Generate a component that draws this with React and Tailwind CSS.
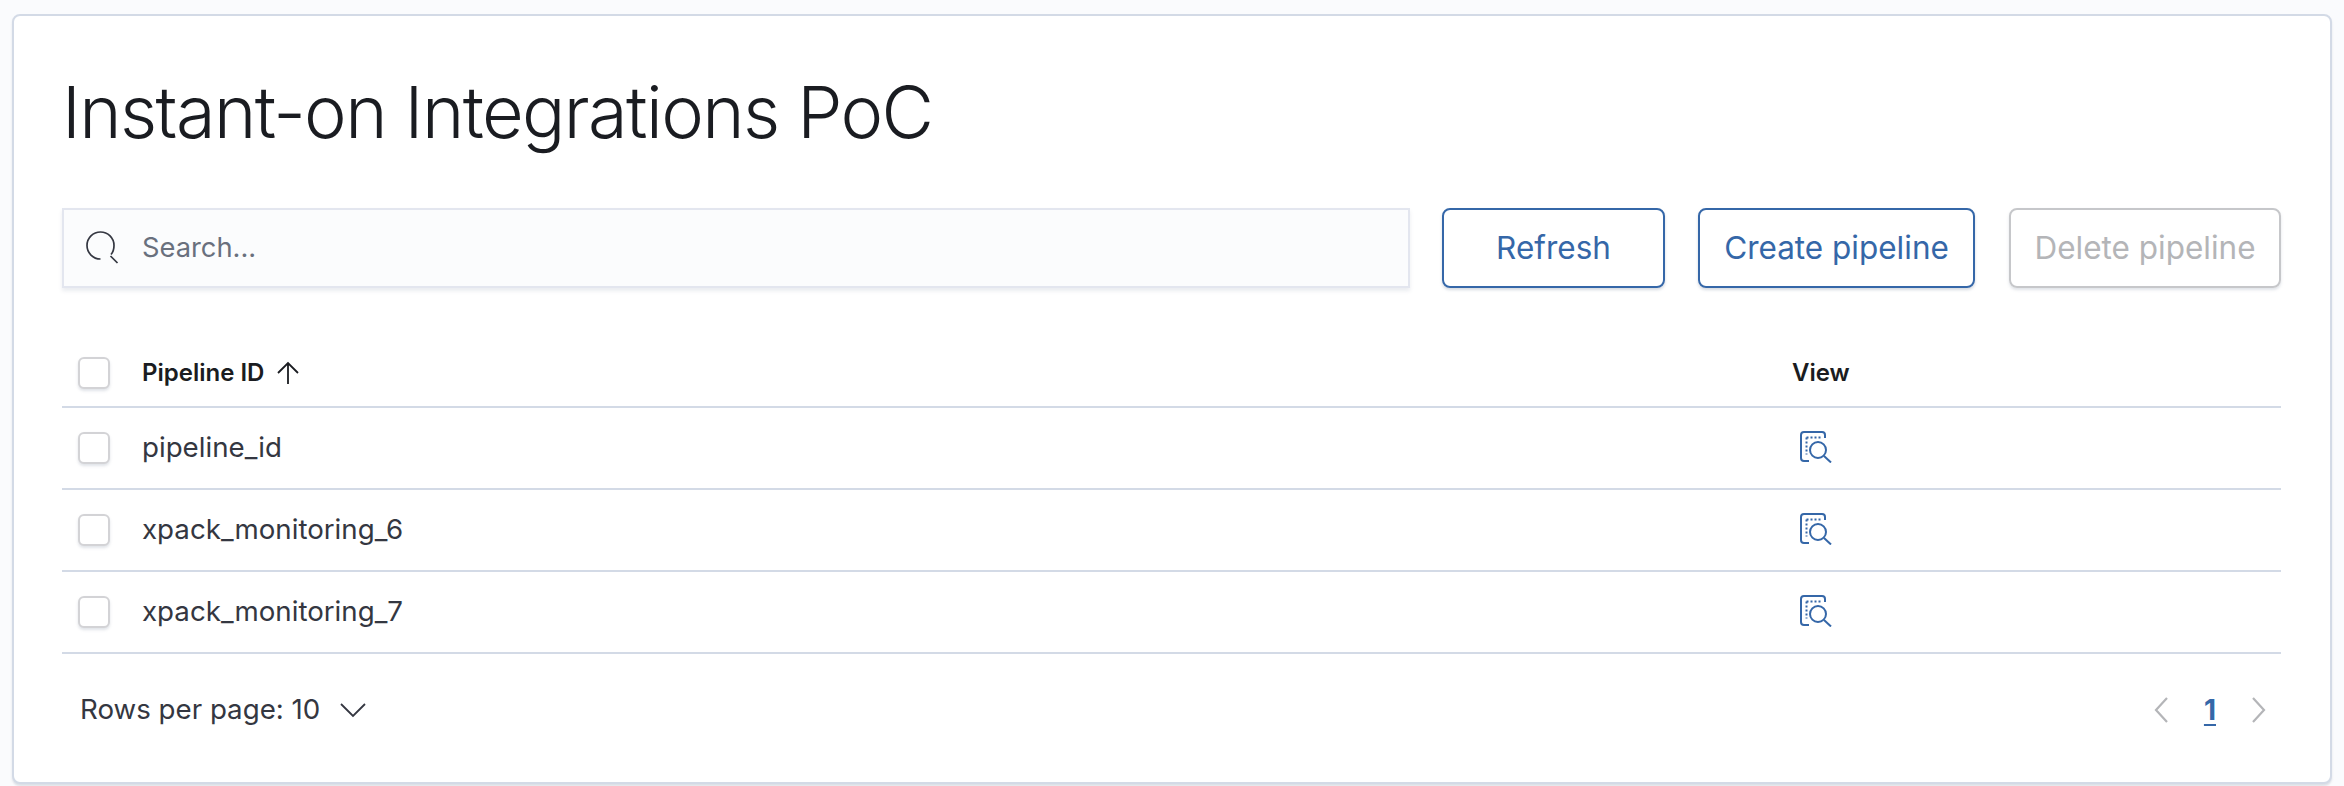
const F = { fontFamily: "Inter, 'Liberation Sans', sans-serif" };

function Check() {
  return <span className="block w-[32px] h-[32px] rounded-[6px] bg-white border-2 border-[#d3d3d6] shadow-[0_2px_3px_rgba(152,162,179,0.3)] shrink-0" />;
}

function ViewIcon() {
  return (
    <svg className="ml-[8px] mb-[2px]" width="34" height="32" viewBox="0 0 34 32" fill="none" stroke="#3567a8" strokeWidth="2">
      <path d="M9 30H4a3 3 0 0 1-3-3V4a3 3 0 0 1 3-3h18a3 3 0 0 1 3 3v3" />
      <path d="M6.5 6.5h15M6.5 6.5v17" strokeDasharray="2 2" />
      <circle cx="18" cy="19" r="8" />
      <path d="M24 25l7 6.5" />
    </svg>
  );
}

function Row({ name }) {
  return (
    <div className="flex items-center h-[82px] border-b-2 border-[#d3dae6]">
      <div className="w-[80px] pl-[16px] flex items-center"><Check /></div>
      <div className="w-[1650px] text-[27.7px] text-[#343741]">{name}</div>
      <ViewIcon />
    </div>
  );
}

export default function App() {
  return (
    <div style={F} className="w-[2344px] h-[786px] bg-[#fafbfd] pt-[14px] px-[12px]">
      <div className="w-[2320px] h-[770px] bg-white border-2 border-[#d3dae6] rounded-[8px] shadow-[0_2px_2px_rgba(152,162,179,0.3)] pt-[54px] pl-[48px] pr-[49px]">
        <h1 className="text-[72px] leading-[84px] font-light text-[#1a1c21] tracking-[-1.6px]">Instant-on Integrations PoC</h1>
        <div className="flex mt-[54px] h-[80px]">
          <div className="w-[1348px] h-[80px] flex items-center bg-[#fbfcfd] border-2 border-[#e3e6ef] shadow-[0_3px_4px_rgba(152,162,179,0.2)]">
            <svg className="ml-[22px]" width="34" height="34" viewBox="0 0 34 34" fill="none" stroke="#343741" strokeWidth="1.7">
              <path d="M14.5 28a13.5 13.5 0 1 1 13.5-13.5c0 3.5-.8 6.5-3 9" />
              <path d="M24.5 25l7 7" />
            </svg>
            <span className="ml-[22px] text-[27.3px] text-[#69707d]">Search...</span>
          </div>
          <button className="ml-[32px] w-[223px] h-[80px] rounded-[8px] border-2 border-[#3567a8] text-[31.5px] text-[#3567a8] shadow-[0_2px_3px_rgba(152,162,179,0.4)]">Refresh</button>
          <button className="ml-[33px] w-[277px] h-[80px] rounded-[8px] border-2 border-[#3567a8] text-[31.5px] text-[#3567a8] shadow-[0_2px_3px_rgba(152,162,179,0.4)]">Create pipeline</button>
          <button className="ml-[34px] w-[272px] h-[80px] rounded-[8px] border-2 border-[#c6c7ca] text-[31.5px] text-[#b4b5b8] shadow-[0_2px_3px_rgba(152,162,179,0.3)]">Delete pipeline</button>
        </div>
        <div className="mt-[52px]">
          <div className="flex items-center h-[68px] border-b-2 border-[#d3dae6]">
            <div className="w-[80px] pl-[16px] flex items-center"><Check /></div>
            <div className="w-[1650px] flex items-center text-[24px] font-semibold text-[#1a1c21]">
              Pipeline ID
              <svg className="ml-[12px]" width="24" height="24" viewBox="0 0 24 24" fill="none" stroke="#1a1c21" strokeWidth="1.8">
                <path d="M12 23V2M2 12L12 2l10 10" />
              </svg>
            </div>
            <div className="text-[24px] font-semibold text-[#1a1c21]">View</div>
          </div>
          <Row name="pipeline_id" />
          <Row name="xpack_monitoring_6" />
          <Row name="xpack_monitoring_7" />
        </div>
        <div className="flex items-center justify-between h-[112px]">
          <div className="flex items-center pl-[18px] text-[27.7px] text-[#343741]">
            Rows per page: 10
            <svg className="ml-[20px]" width="26" height="16" viewBox="0 0 26 16" fill="none" stroke="#343741" strokeWidth="1.8">
              <path d="M1 2l12 12L25 2" />
            </svg>
          </div>
          <div className="flex items-center pr-[15px]">
            <svg width="14" height="26" viewBox="0 0 14 26" fill="none" stroke="#b4b5b8" strokeWidth="2.2"><path d="M13 1L2 13l11 12" /></svg>
            <span className="ml-[36px] text-[28px] font-bold text-[#3567a8] underline underline-offset-4">1</span>
            <svg className="ml-[36px]" width="14" height="26" viewBox="0 0 14 26" fill="none" stroke="#b4b5b8" strokeWidth="2.2"><path d="M1 1l11 12L1 25" /></svg>
          </div>
        </div>
      </div>
    </div>
  );
}
